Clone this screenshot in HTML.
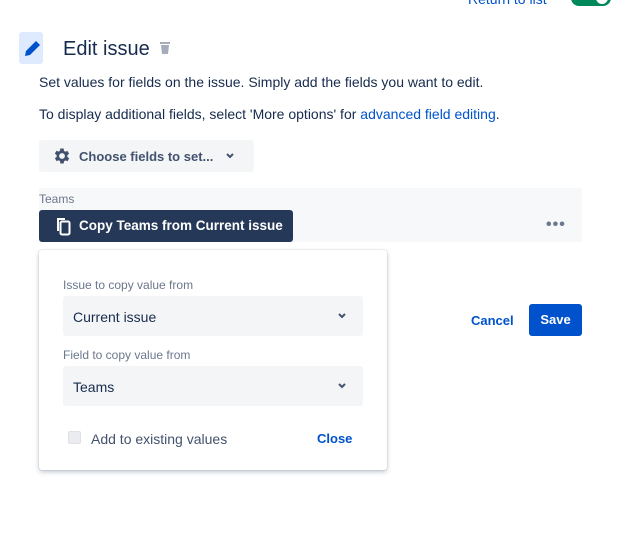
<!DOCTYPE html>
<html><head><meta charset="utf-8">
<style>
*{box-sizing:border-box;margin:0;padding:0}
body{width:627px;height:535px;background:#fff;font-family:"Liberation Sans",sans-serif;color:#172b4d;position:relative;overflow:hidden;font-size:14px}
.abs{position:absolute}
</style></head><body>
<div class="abs" style="left:468px;top:-9px;color:#0052cc;font-size:14px">Return to list</div>
<div class="abs" style="left:571px;top:-10px;width:40px;height:16px;border-radius:8px;background:#00875a"><div style="position:absolute;right:3px;top:2px;width:12px;height:12px;border-radius:6px;background:#fff"></div></div>

<div class="abs" style="left:19px;top:32px;width:24px;height:32px;background:#deebff;border-radius:3px">
<svg width="24" height="32" viewBox="0 0 24 32"><path d="M6 24 L7 19 L17 9 L21 13 L11 23 Z" fill="#0052cc"/></svg></div>
<div class="abs" style="left:63px;top:38px;font-size:20px;color:#172b4d">Edit issue</div>
<svg class="abs" style="left:159px;top:41px" width="12" height="14" viewBox="0 0 12 14"><rect x="1" y="1" width="10" height="2" fill="#a5adba"/><path d="M2 4 H10 L9 13 H3 Z" fill="#a5adba"/></svg>

<div class="abs" style="left:39px;top:74px;color:#172b4d">Set values for fields on the issue. Simply add the fields you want to edit.</div>
<div class="abs" style="left:39px;top:106px;color:#172b4d">To display additional fields, select 'More options' for <span style="color:#0052cc">advanced field editing</span>.</div>

<div class="abs" style="left:39px;top:140px;width:215px;height:32px;background:#f4f5f7;border-radius:3px">
<svg class="abs" style="left:13px;top:6px" width="20" height="20" viewBox="0 0 24 24"><path fill="#42526e" d="M19.4 13a7.5 7.5 0 000-2l2.1-1.6-2-3.5-2.5 1a7 7 0 00-1.7-1L15 3h-4l-.4 2.7a7 7 0 00-1.7 1l-2.5-1-2 3.5L6.6 11a7.5 7.5 0 000 2l-2.1 1.6 2 3.5 2.5-1a7 7 0 001.7 1L11 21h4l.4-2.7a7 7 0 001.7-1l2.5 1 2-3.5zM13 15.5a3.5 3.5 0 110-7 3.5 3.5 0 010 7z" transform="translate(-1 0)"/></svg>
<div class="abs" style="left:40px;top:9px;color:#42526e;font-weight:bold;font-size:13px">Choose fields to set...</div>
<svg class="abs" style="left:186px;top:12px" width="10" height="8" viewBox="0 0 10 8"><path d="M2 2 L5 5 L8 2" stroke="#42526e" stroke-width="2" fill="none"/></svg>
</div>

<div class="abs" style="left:39px;top:188px;width:543px;height:54px;background:#f7f8f9"></div>
<div class="abs" style="left:39px;top:192px;font-size:12px;color:#6b778c">Teams</div>
<div class="abs" style="left:39px;top:210px;width:254px;height:32px;background:#253858;border-radius:3px">
<svg class="abs" style="left:15px;top:6px" width="18" height="20" viewBox="0 0 18 20"><path d="M3 2 H11 V4 H5 V15 H3 Z" fill="#fff"/><rect x="6.5" y="5.5" width="9" height="13" rx="1.5" fill="none" stroke="#fff" stroke-width="2"/></svg>
<div class="abs" style="left:40px;top:8px;color:#fff;font-weight:bold;font-size:13.5px">Copy Teams from Current issue</div>
</div>
<div class="abs" style="left:546px;top:216px;color:#6b778c;font-size:16px;letter-spacing:1px;font-weight:bold">•••</div>

<div class="abs" style="left:39px;top:250px;width:348px;height:220px;background:#fff;border-radius:3px;box-shadow:0 2px 5px rgba(9,30,66,.25),0 0 1px rgba(9,30,66,.31)">
<div class="abs" style="left:24px;top:28px;font-size:12px;color:#6b778c">Issue to copy value from</div>
<div class="abs" style="left:24px;top:46px;width:300px;height:40px;background:#f4f5f7;border-radius:3px">
<div class="abs" style="left:10px;top:13px;color:#172b4d">Current issue</div>
<svg class="abs" style="left:274px;top:16px" width="10" height="8" viewBox="0 0 10 8"><path d="M2 2 L5 5 L8 2" stroke="#42526e" stroke-width="2" fill="none"/></svg>
</div>
<div class="abs" style="left:24px;top:98px;font-size:12px;color:#6b778c">Field to copy value from</div>
<div class="abs" style="left:24px;top:116px;width:300px;height:40px;background:#f4f5f7;border-radius:3px">
<div class="abs" style="left:10px;top:13px;color:#172b4d">Teams</div>
<svg class="abs" style="left:274px;top:16px" width="10" height="8" viewBox="0 0 10 8"><path d="M2 2 L5 5 L8 2" stroke="#42526e" stroke-width="2" fill="none"/></svg>
</div>
<div class="abs" style="left:29px;top:181px;width:13px;height:13px;background:#ebecf0;border:1px solid #dfe1e6;border-radius:2px"></div>
<div class="abs" style="left:52px;top:181px;color:#42526e">Add to existing values</div>
<div class="abs" style="left:278px;top:181px;color:#0052cc;font-weight:bold;font-size:13px">Close</div>
</div>

<div class="abs" style="left:471px;top:313px;color:#0052cc;font-weight:bold;font-size:13px">Cancel</div>
<div class="abs" style="left:529px;top:304px;width:53px;height:32px;background:#0052cc;border-radius:3px;color:#fff;font-weight:bold;font-size:13px;text-align:center;line-height:32px">Save</div>
</body></html>
